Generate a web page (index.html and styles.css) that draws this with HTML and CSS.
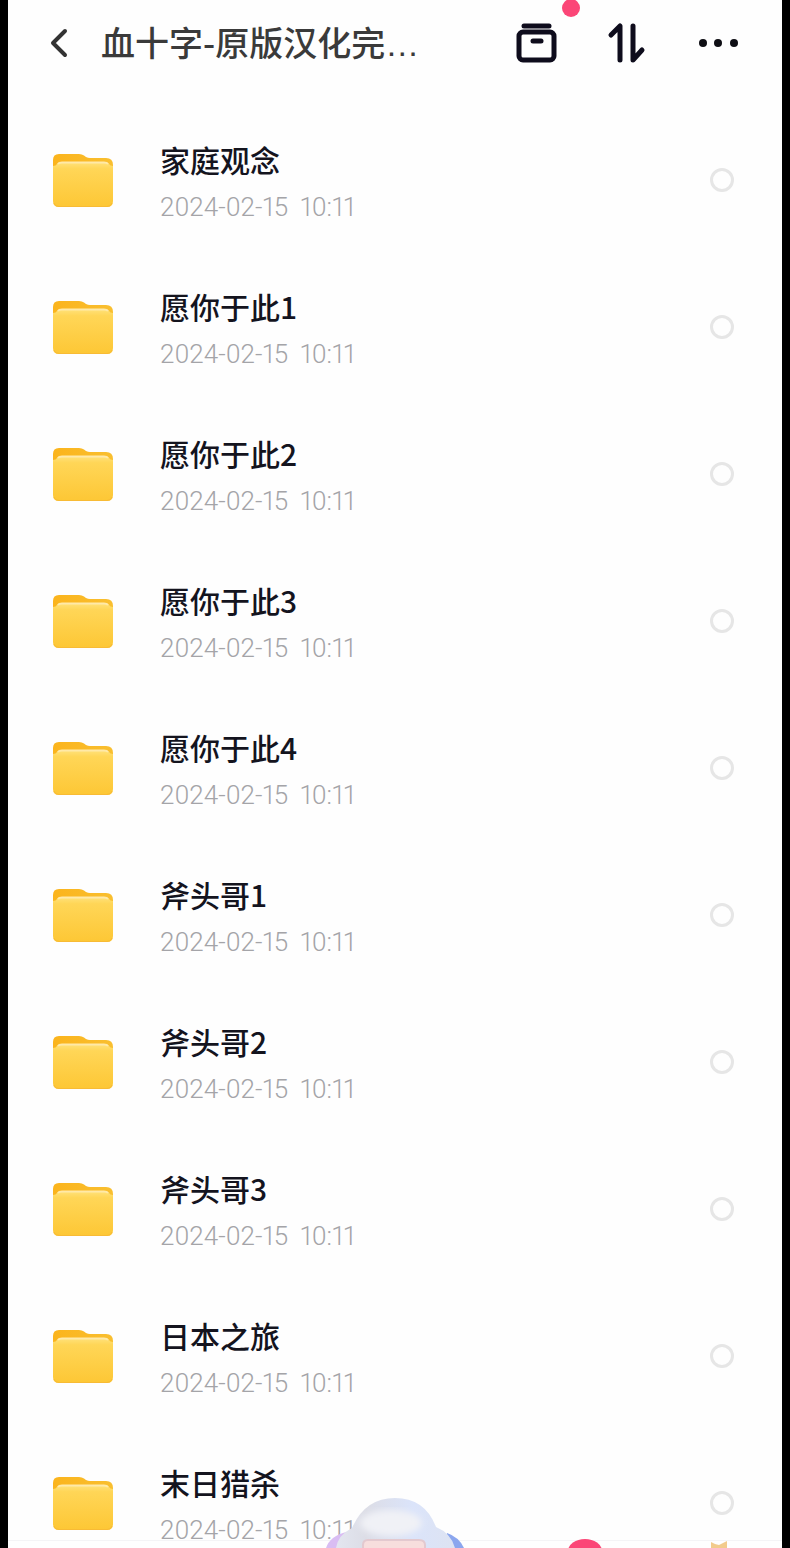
FILE: index.html
```html
<!DOCTYPE html>
<html lang="zh-CN">
<head>
    <meta charset="UTF-8">
    <meta name="viewport" content="width=device-width, initial-scale=1.0">
    <title>血十字-原版汉化完…</title>
    <link rel="stylesheet" href="styles.css">
</head>
<body>
    <!-- Shared folder icon -->
    <svg class="sprite" aria-hidden="true">
        <defs>
            <linearGradient id="folderBack" x1="0" y1="0" x2="1" y2="0">
                <stop offset="0" stop-color="#fbb41c"/>
                <stop offset="1" stop-color="#f9bf30"/>
            </linearGradient>
            <linearGradient id="folderFront" x1="0" y1="0" x2="0" y2="1">
                <stop offset="0" stop-color="#ffe27c"/>
                <stop offset="0.15" stop-color="#ffd657"/>
                <stop offset="1" stop-color="#fdc735"/>
            </linearGradient>
            <symbol id="folder" viewBox="0 0 62 56">
                <path d="M1 14V7q0-6 6-6h20q3 0 5 1.500l2 1.500q2 1 4 1h16q7 0 7 7v8H1z" fill="url(#folderBack)"/>
                <path d="M1 13q3 0 4-2t5-2h42q4 0 5 2t4 2v35q0 6-6 6H7q-6 0-6-6z" fill="url(#folderFront)"/>
                <path d="M6 11q1-1.500 4-1.500h42q3 0 4 1.500" fill="none" stroke="#ffe9a8" stroke-width="2"/>
                <path d="M2 50q1 3.500 5 3.500h48q4 0 5-3.500" fill="none" stroke="#f8bb35" stroke-width="1"/>
            </symbol>
        </defs>
    </svg>

    <div class="app">
        <header>
            <button type="button" class="icon-button back" aria-label="返回">
                <svg width="18" height="30" viewBox="0 0 18 30"><path d="M15 3L3 15l12 12" fill="none" stroke="#333" stroke-width="4" stroke-linecap="round" stroke-linejoin="round"/></svg>
            </button>
            <h1>血十字-原版汉化完<span class="more">…</span></h1>
            <div class="actions">
                <button type="button" class="icon-button" aria-label="收纳">
                    <svg width="42" height="42" viewBox="0 0 42 42" fill="none" stroke="#0e0c1c" stroke-linecap="round">
                        <path d="M9 4h25" stroke-width="5"/>
                        <rect x="4" y="10" width="35" height="28" rx="4" stroke-width="5"/>
                        <path d="M18 19h8" stroke-width="5"/>
                    </svg>
                    <span class="dot"></span>
                </button>
                <button type="button" class="icon-button" aria-label="排序">
                    <svg width="42" height="42" viewBox="0 0 42 42" fill="none" stroke="#0e0c1c" stroke-width="5" stroke-linecap="round" stroke-linejoin="round">
                        <path d="M5 13l9-9v34"/>
                        <path d="M27 4v34l9-10"/>
                    </svg>
                </button>
                <button type="button" class="icon-button" aria-label="更多">
                    <svg width="42" height="42" viewBox="0 0 42 42" fill="#0e0e14">
                        <circle cx="6" cy="21" r="4"/>
                        <circle cx="21" cy="21" r="4"/>
                        <circle cx="37" cy="21" r="4"/>
                    </svg>
                </button>
            </div>
        </header>

        <ul class="file-list">
            <li>
                <svg class="folder"><use href="#folder"/></svg>
                <div class="info">
                    <label for="f1">家庭观念</label>
                    <div class="date"><span>2024-02-15</span><span>10:11</span></div>
                </div>
                <input type="checkbox" id="f1">
            </li>
            <li>
                <svg class="folder"><use href="#folder"/></svg>
                <div class="info">
                    <label for="f2">愿你于此1</label>
                    <div class="date"><span>2024-02-15</span><span>10:11</span></div>
                </div>
                <input type="checkbox" id="f2">
            </li>
            <li>
                <svg class="folder"><use href="#folder"/></svg>
                <div class="info">
                    <label for="f3">愿你于此2</label>
                    <div class="date"><span>2024-02-15</span><span>10:11</span></div>
                </div>
                <input type="checkbox" id="f3">
            </li>
            <li>
                <svg class="folder"><use href="#folder"/></svg>
                <div class="info">
                    <label for="f4">愿你于此3</label>
                    <div class="date"><span>2024-02-15</span><span>10:11</span></div>
                </div>
                <input type="checkbox" id="f4">
            </li>
            <li>
                <svg class="folder"><use href="#folder"/></svg>
                <div class="info">
                    <label for="f5">愿你于此4</label>
                    <div class="date"><span>2024-02-15</span><span>10:11</span></div>
                </div>
                <input type="checkbox" id="f5">
            </li>
            <li>
                <svg class="folder"><use href="#folder"/></svg>
                <div class="info">
                    <label for="f6">斧头哥1</label>
                    <div class="date"><span>2024-02-15</span><span>10:11</span></div>
                </div>
                <input type="checkbox" id="f6">
            </li>
            <li>
                <svg class="folder"><use href="#folder"/></svg>
                <div class="info">
                    <label for="f7">斧头哥2</label>
                    <div class="date"><span>2024-02-15</span><span>10:11</span></div>
                </div>
                <input type="checkbox" id="f7">
            </li>
            <li>
                <svg class="folder"><use href="#folder"/></svg>
                <div class="info">
                    <label for="f8">斧头哥3</label>
                    <div class="date"><span>2024-02-15</span><span>10:11</span></div>
                </div>
                <input type="checkbox" id="f8">
            </li>
            <li>
                <svg class="folder"><use href="#folder"/></svg>
                <div class="info">
                    <label for="f9">日本之旅</label>
                    <div class="date"><span>2024-02-15</span><span>10:11</span></div>
                </div>
                <input type="checkbox" id="f9">
            </li>
            <li>
                <svg class="folder"><use href="#folder"/></svg>
                <div class="info">
                    <label for="f10">末日猎杀</label>
                    <div class="date"><span>2024-02-15</span><span>10:11</span></div>
                </div>
                <input type="checkbox" id="f10">
            </li>
        </ul>

        <!-- Top edge of the tab bar, the avatar sticks out above it -->
        <footer>
            <svg class="avatar" width="144" height="52" viewBox="0 0 144 52" aria-hidden="true">
                <defs>
                    <linearGradient id="hair" x1="0" y1="0" x2="1" y2="0">
                        <stop offset="0" stop-color="#e3e6f0"/>
                        <stop offset="0.25" stop-color="#dcdde6"/>
                        <stop offset="0.65" stop-color="#dbe4fa"/>
                        <stop offset="1" stop-color="#dde3f2"/>
                    </linearGradient>
                    <filter id="soft"><feGaussianBlur stdDeviation="3"/></filter>
                </defs>
                <path d="M3 52q4-12 20-16v16z" fill="#d9bdf3"/>
                <path d="M124 37q12 4 17 15h-20z" fill="#8ba6ee"/>
                <path d="M13 52q2-13 16-20Q42 2 72 2t41 29q15 6 19 21z" fill="url(#hair)"/>
                <ellipse cx="68" cy="27" rx="31" ry="13" fill="#f0f1f6" filter="url(#soft)"/>
                <path d="M40 52V49q0-5 5-5h51q6 0 6 5v3z" fill="#f7dedd"/>
                <path d="M40 52V49q0-5 5-5h51q6 0 6 5v3" fill="none" stroke="#e3c9cf" stroke-width="2"/>
            </svg>
            <svg class="badge" width="34" height="9" viewBox="0 0 34 9" aria-hidden="true"><ellipse cx="17" cy="12" rx="17" ry="12" fill="#fb4677"/></svg>
            <svg class="crown" width="18" height="7" viewBox="0 0 18 7" aria-hidden="true"><path d="M1 7V1l4 2 4 1 4-2 4-2v7z" fill="#f2cb8c"/></svg>
        </footer>
    </div>
</body>
</html>
```

FILE: styles.css
```css
* {
    box-sizing: border-box;
}

body {
    margin: 0;
    padding: 0 8px;
    background-color: #000;
    font-family: "Noto Sans CJK SC", sans-serif;
}

.sprite {
    position: absolute;
    width: 0;
    height: 0;
}

.app {
    display: flex;
    flex-direction: column;
    height: 100vh;
    overflow: hidden;
    background-color: #fefefe;
}

header {
    display: flex;
    align-items: center;
    flex-shrink: 0;
    height: 106px;
    padding: 0 43px 20px 42px;
}

h1 {
    flex: 1;
    margin: 0 0 0 33px;
    font-size: 34px;
    line-height: 40px;
    font-weight: 500;
    color: #3a3a3a;
    white-space: nowrap;
}

.more {
    font-family: "Liberation Sans", sans-serif;
    font-weight: 400;
}

.icon-button {
    position: relative;
    display: block;
    padding: 0;
    border: none;
    background: none;
    cursor: pointer;
}

.icon-button svg {
    display: block;
}

.actions {
    display: flex;
    gap: 49px;
}

.dot {
    position: absolute;
    top: -23px;
    right: -23px;
    width: 18px;
    height: 18px;
    border-radius: 50%;
    background-color: #fb4677;
}

.file-list {
    flex: 1;
    min-height: 0;
    margin: 0;
    padding: 0;
    overflow: hidden;
    list-style: none;
}

.file-list li {
    display: flex;
    align-items: center;
    height: 147px;
    padding: 0 48px 0 44px;
}

.folder {
    width: 62px;
    height: 56px;
    margin-top: 2px;
}

.info {
    flex: 1;
    margin-left: 46px;
    padding-top: 6px;
}

.info label {
    display: block;
    font-size: 30px;
    line-height: 40px;
    font-weight: 500;
    color: #14141e;
}

.date {
    display: flex;
    gap: 12px;
    margin-top: 8px;
    font-family: Roboto, sans-serif;
    font-size: 26px;
    line-height: 40px;
    font-weight: 300;
    font-variant-numeric: proportional-nums;
    color: #a4a4a8;
}

input[type="checkbox"] {
    appearance: none;
    width: 24px;
    height: 24px;
    margin: 0;
    border: 3px solid #e6e6e6;
    border-radius: 50%;
    cursor: pointer;
}

input[type="checkbox"]:checked {
    border-color: #fb4677;
}

footer {
    position: relative;
    flex-shrink: 0;
    height: 8px;
    border-top: 1px solid #f4f4f6;
    background-color: #fefefe;
}

/* Tab bar items poking over the list */
.avatar {
    position: absolute;
    bottom: 0;
    left: 50%;
    margin-left: -72px;
}

.badge {
    position: absolute;
    bottom: 0;
    right: 180px;
}

.crown {
    position: absolute;
    bottom: 0;
    right: 54px;
}
```
